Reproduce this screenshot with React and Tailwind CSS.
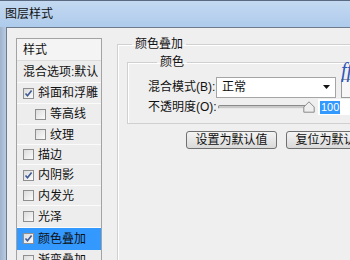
import React from 'react';

const FONT = { fontFamily: '"Liberation Sans", "Noto Sans CJK SC", sans-serif' };

const STYLES = [
  { label: '斜面和浮雕', checked: true,  indent: false, h: 'h-[21px]' },
  { label: '等高线',     checked: false, indent: true,  h: 'h-[21px]' },
  { label: '纹理',       checked: false, indent: true,  h: 'h-[20px]' },
  { label: '描边',       checked: false, indent: false, h: 'h-[20px]' },
  { label: '内阴影',     checked: true,  indent: false, h: 'h-[21px]' },
  { label: '内发光',     checked: false, indent: false, h: 'h-[20px]' },
  { label: '光泽',       checked: false, indent: false, h: 'h-[22px]' },
  { label: '颜色叠加',   checked: true,  indent: false, h: 'h-[22px]', active: true },
  { label: '渐变叠加',   checked: false, indent: false, h: 'h-[21px]' },
];

function Checkbox({ checked }) {
  return (
    <span className="relative w-[11px] h-[11px] shrink-0 border border-[#8f8f8f] bg-gradient-to-br from-[#dcdcdc] to-[#fbfbfb]">
      {checked && (
        <svg className="absolute left-0 top-0" width="9" height="9" viewBox="0 0 9 9">
          <path d="M1.5 4.5 L3.5 6.8 L7.6 1.6" fill="none" stroke="#3f5a94" strokeWidth="1.6" />
        </svg>
      )}
    </span>
  );
}

function StyleList() {
  return (
    <div className="w-[86px] border border-[#a3a3a3] bg-[#ededed] text-[12px] text-[#111]">
      <div className="h-[22px] flex items-center pl-[6px] bg-[#f4f4f4] border-b border-[#dcdcdc]">样式</div>
      <div className="h-[22px] flex items-center pl-[6px] border-b border-[#fbfbfb] whitespace-nowrap">混合选项:默认</div>
      {STYLES.map((s) => (
        <div
          key={s.label}
          className={`${s.h} flex items-center gap-[4px] border-b ${s.active ? 'bg-[#3399ff] border-[#3399ff]' : 'border-[#fbfbfb]'} ${s.indent ? 'pl-[18px]' : 'pl-[6px]'}`}
        >
          <Checkbox checked={s.checked} />
          <span className="whitespace-nowrap">{s.label}</span>
        </div>
      ))}
    </div>
  );
}

function Slider() {
  return (
    <div className="relative w-[96px] h-[14px] ml-[2px] flex items-center">
      <div className="w-[90px] h-[4px] rounded-full border border-[#8a8a8a] border-b-[#e8e8e8] bg-[#c9c9c9]" />
      {/* thumb */}
      <svg className="absolute left-[85px] top-[1px]" width="12" height="12" viewBox="0 0 12 12">
        <path d="M6 0.8 L11.2 6 L11.2 11.2 L0.8 11.2 L0.8 6 Z" fill="#eeeeee" stroke="#8a8a8a" strokeWidth="1" />
      </svg>
    </div>
  );
}

function Button({ children }) {
  return (
    <button className="w-[91px] h-[18px] rounded-[3px] border border-[#707070] bg-gradient-to-b from-[#f4f4f4] to-[#d9d9d9] text-[12px] leading-none text-[#111]">
      {children}
    </button>
  );
}

export default function App() {
  return (
    <div className="w-[350px] h-[260px] overflow-hidden flex flex-col bg-[#a9c4e4]" style={FONT}>
      {/* title bar */}
      <div className="h-[27px] shrink-0 flex items-center pl-[5px] border-t border-[#5a6a80] bg-gradient-to-b from-[#c4d9f1] to-[#aecbec] text-[12px] text-[#111]">
        图层样式
      </div>
      <div className="flex flex-1 min-h-0">
        {/* window frame */}
        <div className="w-[7px] shrink-0 bg-gradient-to-r from-[#9fb4cc] to-[#b7cbe2] border-r border-[#6d7b8c]" />
        {/* client area */}
        <div className="relative flex-1 bg-[#efefef] border-t border-[#6d7b8c] flex pl-[9px] text-[12px] text-[#111]">
          <div className="pt-[10px]">
            <StyleList />
          </div>

          <fieldset className="ml-[15px] mt-[8px] w-[300px] min-h-[240px] border border-[#d0d0d0] shadow-[inset_1px_1px_0_#fff] px-0 pb-0">
            <legend className="ml-[14px] px-[3px] h-[16px] leading-[16px]">颜色叠加</legend>

            <fieldset className="ml-[9px] mt-[2px] border border-[#d0d0d0] shadow-[inset_1px_1px_0_#fff] pl-[20px] pt-[7px] pb-[6px]">
              <legend className="ml-[9px] px-[3px] h-[16px] leading-[16px]">颜色</legend>

              <div className="h-[20px] flex items-center">
                <span className="w-[68px] whitespace-nowrap">混合模式(B):</span>
                <div className="w-[120px] h-[21px] bg-white border border-[#a5a5a5] flex items-center pl-[5px] pr-[5px]">
                  <span className="flex-1">正常</span>
                  <svg width="7" height="4" viewBox="0 0 7 4">
                    <path d="M0 0 H7 L3.5 4 Z" fill="#111" />
                  </svg>
                </div>
                <div className="ml-[5px] w-[24px] h-[19px] mt-[2px] border border-[#9a9a9a] bg-[#f7f7f7]" />
              </div>

              <div className="h-[20px] flex items-center">
                <span className="w-[68px] whitespace-nowrap">不透明度(O):</span>
                <Slider />
                <div className="ml-[4px] h-[16px] w-[40px] bg-white flex items-center pl-[2px]">
                  <span className="bg-[#3399ff] text-white text-[11px] leading-[13px] px-[1px]">100</span>
                </div>
              </div>
            </fieldset>

            <div className="flex gap-[9px] ml-[68px] mt-[7px]">
              <Button>设置为默认值</Button>
              <Button>复位为默认值</Button>
            </div>
          </fieldset>

          {/* watermark fragment */}
          <span className="absolute left-[334px] top-[32px] text-[20px] italic text-[#2f55b8] leading-none" style={{ fontFamily: '"Liberation Serif", serif' }}>
            ffi
          </span>
        </div>
      </div>
    </div>
  );
}
